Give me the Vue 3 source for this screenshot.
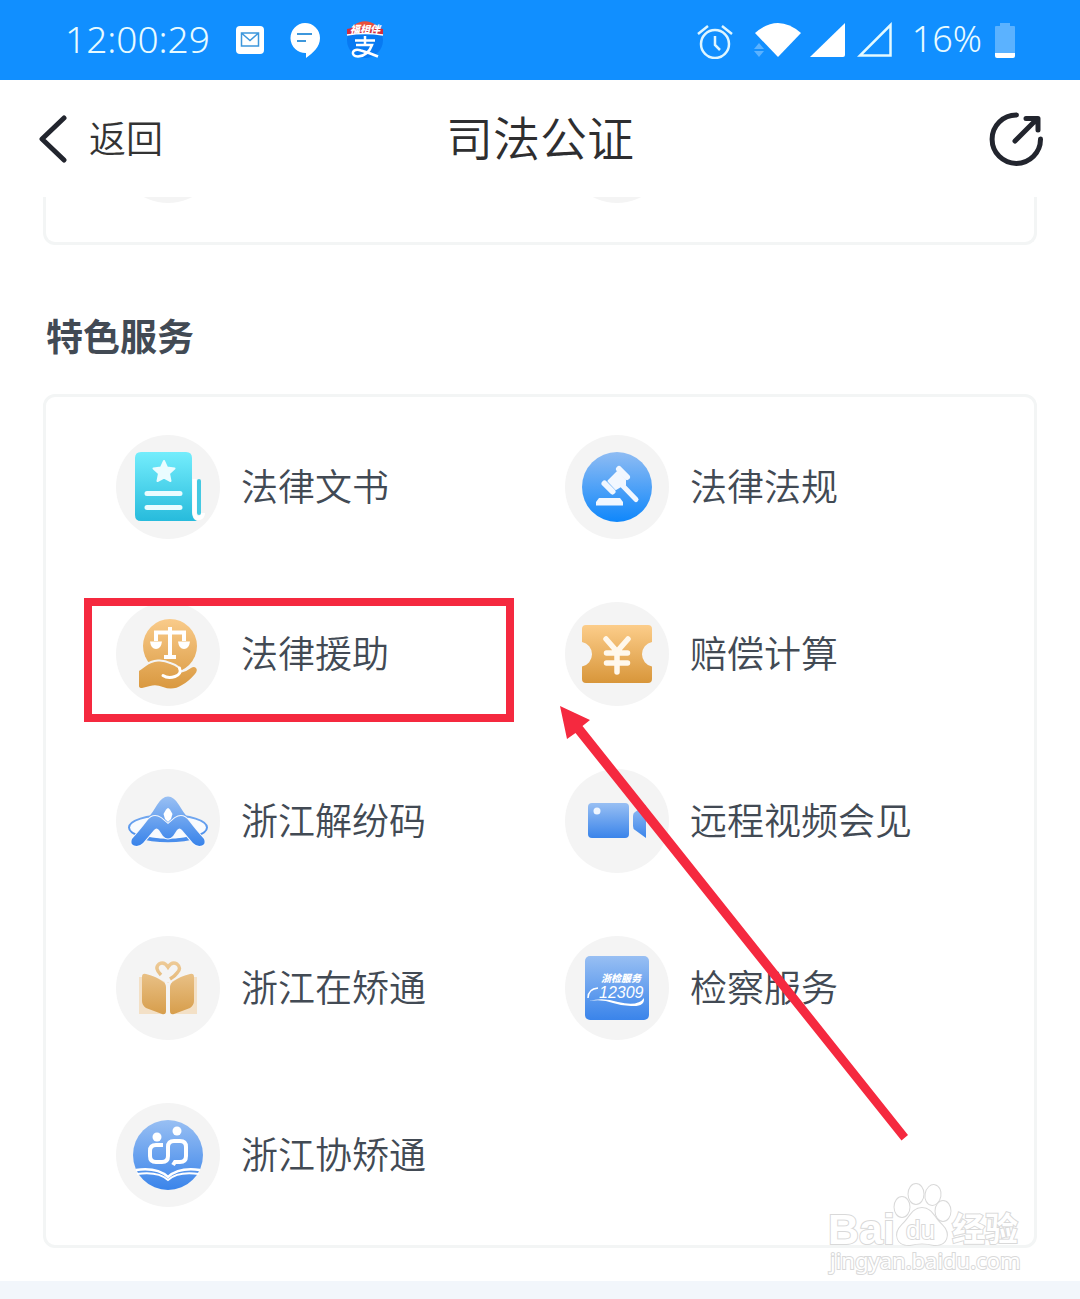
<script setup>
const services = [
  { id: 'doc', label: '法律文书' },
  { id: 'law', label: '法律法规' },
  { id: 'aid', label: '法律援助', marked: true },
  { id: 'pay', label: '赔偿计算' },
  { id: 'dispute', label: '浙江解纷码' },
  { id: 'video', label: '远程视频会见' },
  { id: 'book', label: '浙江在矫通' },
  { id: 'procure', label: '检察服务' },
  { id: 'assist', label: '浙江协矫通' },
]
</script>

<template>
  <div class="page">
    <svg class="defs" width="0" height="0" aria-hidden="true">
      <defs>
        <linearGradient id="gCyan" x1="0" y1="0" x2="0" y2="1"><stop offset="0" stop-color="#74edfc" /><stop offset="1" stop-color="#27bbdc" /></linearGradient>
        <linearGradient id="gBlue" x1="0" y1="0" x2="0" y2="1"><stop offset="0" stop-color="#8fbcf3" /><stop offset="1" stop-color="#0f87fb" /></linearGradient>
        <linearGradient id="gSoft" x1="0" y1="0" x2="0" y2="1"><stop offset="0" stop-color="#98bff3" /><stop offset="1" stop-color="#3a84ea" /></linearGradient>
        <linearGradient id="gGold" x1="0" y1="0" x2="0" y2="1"><stop offset="0" stop-color="#fccd8a" /><stop offset="1" stop-color="#d8963a" /></linearGradient>
        <linearGradient id="gGoldAll" gradientUnits="userSpaceOnUse" x1="0" y1="17" x2="0" y2="87"><stop offset="0" stop-color="#f9cb8a" /><stop offset="1" stop-color="#d9983f" /></linearGradient>
        <linearGradient id="gPeak" gradientUnits="userSpaceOnUse" x1="0" y1="28" x2="0" y2="76"><stop offset="0" stop-color="#98bff3" /><stop offset="1" stop-color="#3a84ea" /></linearGradient>
        <linearGradient id="gBook" gradientUnits="userSpaceOnUse" x1="0" y1="25" x2="0" y2="78"><stop offset="0" stop-color="#eecb98" /><stop offset="1" stop-color="#d79e4c" /></linearGradient>
      </defs>
    </svg>

    <div class="status">
      <div class="status-group left">
        <span class="clock">12:00:29</span>
        <svg width="28" height="28" viewBox="0 0 28 28"><rect width="28" height="28" rx="4" fill="#fff" /><path d="M5.500 7h17v13h-17zM6 7.500l8 7 8-7" fill="none" stroke="#3d97dc" stroke-width="1.500" /></svg>
        <svg width="30" height="38" viewBox="0 0 30 38"><path d="M15 2a15 15 0 0 1 15 15c0 9-7 15-14 20v-5A15 15 0 1 1 15 2z" fill="#fff" /><path d="M7 13h15M7 20h9" stroke="#3d97dc" stroke-width="2" /></svg>
        <svg width="38" height="40" viewBox="0 0 38 40">
          <circle cx="19" cy="20" r="18" fill="#087af2" />
          <path d="M2 14A18 19 0 0 1 36 14Q19 11 2 14z" fill="#e9503b" />
          <path d="M1 9Q19 4 37 9L37 15Q19 11 1 15z" fill="#d42e3d" />
          <path d="M1 15Q19 12 37 15" stroke="#fff" stroke-width="1.500" fill="none" />
          <text x="19" y="13" text-anchor="middle" class="ali-top">福相伴</text>
          <path d="M9 20.500H29M19 16V25M10 25H26Q22 36 12 36.500Q6 36 7 32Q9 28.500 15 30.500Q24 33 32 36.500" fill="none" stroke="#fff" stroke-width="2.500" />
        </svg>
      </div>
      <div class="status-group right">
        <svg width="38" height="38" viewBox="0 0 38 38" fill="none" stroke="#dff6ff" stroke-width="2.500"><circle cx="19" cy="23" r="14" /><path d="M19 15v9l5 5M2 13L12 5M26 5l10 8" /></svg>
        <svg class="wifi" width="48" height="36" viewBox="0 0 48 36"><path d="M1 11Q24-9 47 11L24 35z" fill="#fff" /><path d="M0 27l5-6 5 6zM0 29h10l-5 6z" fill="#5bb2ff" /></svg>
        <div class="signals">
          <svg width="35" height="36" viewBox="0 0 35 36"><path d="M35 1v32q0 2-2 2H0z" fill="#fff" /></svg>
          <svg width="35" height="36" viewBox="0 0 35 36"><path d="M33.500 3v30.500H3z" fill="none" stroke="#e4faff" stroke-width="2.500" /></svg>
        </div>
        <div class="power">
          <span class="percent">16%</span>
          <svg width="20" height="36" viewBox="0 0 20 36"><path d="M0 5q0-1 1-1h4V1h10v3h4q1 0 1 1v26H0z" fill="#5bb2ff" /><path d="M0 31h20v3q0 2-2 2H2q-2 0-2-2z" fill="#fff" /></svg>
        </div>
      </div>
    </div>

    <header class="nav">
      <button class="back" type="button">
        <svg width="30" height="48" viewBox="0 0 30 48"><path d="M26 3L4 24L26 45" fill="none" stroke="#22252e" stroke-width="5" stroke-linecap="round" stroke-linejoin="round" /></svg>
        <span>返回</span>
      </button>
      <h1>司法公证</h1>
      <button class="share" type="button" aria-label="分享">
        <svg width="56" height="56" viewBox="0 0 56 56" fill="none" stroke="#22252e" stroke-width="5" stroke-linecap="round" stroke-linejoin="round"><path d="M28.500 4A24.200 24.200 0 1 0 52.500 28M27 30L49 8M38 7.500H50V19" /></svg>
      </button>
    </header>

    <main class="main">
      <div class="card previous">
        <div class="sliver"><i></i><i></i></div>
      </div>

      <h2>特色服务</h2>

      <section class="card">
        <ul class="grid">
          <li v-for="s in services" :key="s.id" :class="{ marked: s.marked }">
            <a href="#">
              <svg class="icon" viewBox="0 0 104 104" aria-hidden="true">
                <circle cx="52" cy="52" r="52" fill="#f4f4f4" />
                <g v-if="s.id === 'doc'">
                  <path d="M25 17H70Q76 17 76 23V77Q76 84 81 86H25Q19 86 19 80V23Q19 17 25 17Z" fill="url(#gCyan)" />
                  <path d="M78.500 44V78Q79 84 83.500 83Q87 82 87 78" fill="none" stroke="#fff" stroke-width="4" />
                  <rect x="81" y="44" width="4" height="36" rx="2" fill="#45c9e2" />
                  <path d="M48 26L51 32.500L58.500 33.500L53 38.500L54.500 46L48 42.500L41.500 46L43 38.500L37.500 33.500L45 32.500Z" fill="#eafcff" stroke="#eafcff" stroke-width="2" stroke-linejoin="round" />
                  <path d="M31 58.500H64M31 72.500H64" stroke="#eafcff" stroke-width="5" stroke-linecap="round" />
                </g>
                <g v-else-if="s.id === 'law'">
                  <circle cx="52" cy="52" r="35" fill="url(#gBlue)" />
                  <path d="M54 34L62 42M39.500 48.500L47.500 56.500" stroke="#f1f7ff" stroke-width="6" stroke-linecap="round" />
                  <path d="M43.500 46L52.500 37L60 45L60 50L56 51L51 54Z" fill="#f1f7ff" stroke="#f1f7ff" stroke-width="2" stroke-linejoin="round" />
                  <path d="M57 50L71 64.500" stroke="#f1f7ff" stroke-width="5" stroke-linecap="round" />
                  <path d="M34 63H55L58 67V70.500H31V67Z" fill="#f1f7ff" />
                </g>
                <g v-else-if="s.id === 'aid'">
                  <circle cx="54" cy="44" r="27" fill="url(#gGoldAll)" />
                  <path d="M54 25V53M40 39V30.500H68V39" fill="none" stroke="#fff" stroke-width="4" />
                  <path d="M48 55H60" stroke="#fff" stroke-width="4" />
                  <path d="M34 39.500H46Q45 47 40 47Q35 47 34 39.500ZM62 39.500H74Q73 47 68 47Q63 47 62 39.500Z" fill="#fff" />
                  <path d="M23 69Q26 67 30 64Q35 60 42 59.500Q48 59 54 62Q64 65 64 71Q70 70 75 66Q78 64 80 66Q82 68 79 72Q72 80 66 83Q57 89 47 85Q40 82 34 84L26 86Q23 86 23 84Z" fill="url(#gGoldAll)" stroke="#f4f4f4" stroke-width="4" paint-order="stroke" />
                  <path d="M47 73.500Q52 77 59 74.500Q66 72 63.500 66" fill="none" stroke="#fff" stroke-width="3" stroke-linecap="round" />
                </g>
                <g v-else-if="s.id === 'pay'">
                  <path d="M21 23H83Q87 23 87 27V40A12.500 12.500 0 0 0 87 64.500V77Q87 81 83 81H21Q17 81 17 77V64.500A12.500 12.500 0 0 0 17 40V27Q17 23 21 23Z" fill="url(#gGold)" />
                  <path d="M41 37L52 49.500L63 37M52 50V70M41.500 51H62.500M41.500 61H62.500" fill="none" stroke="#fff8ec" stroke-width="5.500" stroke-linecap="round" />
                </g>
                <g v-else-if="s.id === 'dispute'">
                  <ellipse cx="52" cy="58.500" rx="39" ry="12.500" fill="#f9fbfe" stroke="url(#gPeak)" stroke-width="2" />
                  <path d="M20 67Q52 76 84 67" fill="none" stroke="#4a8eec" stroke-width="3.500" />
                  <path d="M32 49Q37 43 41 36Q46 27.500 52 27.500Q58 27.500 63 36Q67 43 72 49L64 50L52 54L40 50Z" fill="url(#gPeak)" />
                  <path d="M52 39Q50.500 39 47.500 45L49 50L52 53L55 50L56.500 45Q53.500 39 52 39Z" fill="#fff" />
                  <path d="M16 70Q25 60 31 52Q37 44 45 49L52 55L59 49Q67 44 73 52Q79 60 88 70Q90 75 86 76.500Q81 78 77 74L66 61Q63.500 58 61 61L57 67Q52 72 47 67L43 61Q40.500 58 38 61L27 74Q23 78 18 76.500Q14 75 16 70Z" fill="url(#gPeak)" stroke="#f6f8fc" stroke-width="2" paint-order="stroke" />
                </g>
                <g v-else-if="s.id === 'video'" fill="url(#gSoft)">
                  <rect x="23" y="34" width="41" height="35" rx="4" />
                  <path d="M68 47Q68 44 70 43L81 36V69L70 61Q68 60 68 57Z" />
                  <circle cx="32" cy="42" r="3.500" fill="#eff6ff" />
                </g>
                <g v-else-if="s.id === 'book'">
                  <path d="M23 41H81V78H23Z" fill="#f3e0c6" />
                  <path d="M30 36H74L55 46H49Z" fill="#f4f4f4" />
                  <path d="M49 44L52 47L56 44L55 78H49Z" fill="#f4f4f4" />
                  <path d="M26 41Q26 37 30 38Q39 40 46 45Q50 47 50 51V75Q50 79 46 78Q38 75 30 72Q26 69 26 65ZM78 41Q78 37 74 38Q65 40 58 45Q54 47 54 51V75Q54 79 58 78Q66 75 74 72Q78 69 78 65Z" fill="url(#gBook)" />
                  <path d="M45 39Q38 32 43 28Q48 25 52 31Q56 25 61 28Q66 32 61 37Q59 40 54 43" fill="none" stroke="url(#gBook)" stroke-width="3.500" />
                </g>
                <g v-else-if="s.id === 'procure'">
                  <rect x="20" y="20" width="64" height="64" rx="5" fill="url(#gSoft)" />
                  <text x="36" y="46" class="tiny-cn">浙检服务</text>
                  <text x="34" y="62" class="tiny-num">12309</text>
                  <path d="M23 62Q23 53 33 52" fill="none" stroke="#fff" stroke-width="1.500" />
                  <path d="M24 65Q38 61 53 66Q73 71 79 62Q80 71 66 70Q57 70 48 67Q38 63 24 65Z" fill="#fff" />
                </g>
                <g v-else>
                  <circle cx="52" cy="52" r="35" fill="url(#gSoft)" />
                  <circle cx="41" cy="34" r="4.500" fill="#fff" /><circle cx="61" cy="28" r="4.500" fill="#fff" />
                  <path d="M47 42H40Q34 42 34 48V53Q34 59 40 59H46Q52 59 52 53V44Q52 38 58 38H64Q70 38 70 44V53Q70 59 64 59H59L57 62" fill="none" stroke="#fff" stroke-width="4" />
                  <path d="M20 67Q41 64 52 74Q63 64 84 67" fill="none" stroke="#fff" stroke-width="2.500" />
                  <path d="M21 71Q42 68 52 77Q62 68 83 71" fill="none" stroke="#fff" stroke-width="2" />
                </g>
              </svg>
              <span>{{ s.label }}</span>
            </a>
          </li>
        </ul>
        <svg class="arrow" width="348" height="435" viewBox="0 0 348 435" aria-hidden="true"><path d="M0 0L30 14L22.500 20L348 429L341.500 434.500L15.500 27L7 33Z" fill="#f5293f" /></svg>
      </section>

      <svg class="watermark" width="200" height="100" viewBox="0 0 200 100">
        <g class="wm">
          <text x="2" y="63" class="wm-bai">Bai</text>
          <ellipse cx="76" cy="26" rx="7.500" ry="10" /><ellipse cx="90" cy="13" rx="7.500" ry="10" /><ellipse cx="107" cy="14" rx="7.500" ry="10" transform="rotate(10 107 14)" /><ellipse cx="117" cy="30" rx="7.500" ry="10" />
          <path d="M96 27C106 27 108 37 116 44C125 53 121 65 108 64Q96 61 84 64C71 65 67 53 76 44C84 37 86 27 96 27Z" />
          <text x="80" y="58" class="wm-du">du</text>
          <text x="126" y="60" class="wm-cn">经验</text>
          <text x="4" y="88" class="wm-url">jingyan.baidu.com</text>
        </g>
      </svg>
    </main>
  </div>
</template>

<style>
body {
  margin: 0;
  background: #f2f6fb;
}
</style>

<style scoped>
.page {
  min-height: 100vh;
  background: #f2f6fb;
  color: #424a54;
  font-family: "Noto Sans CJK SC", "Noto Sans", sans-serif;
  font-weight: 350;
}
.page svg {
  display: block;
  flex: none;
}
.page .defs {
  position: absolute;
}
.status {
  display: flex;
  justify-content: space-between;
  align-items: center;
  height: 80px;
  padding: 0 65px;
  background: #118fff;
  color: #e8fbff;
  font-family: "Noto Sans", sans-serif;
  font-weight: 300;
}
.status-group,
.signals,
.power {
  display: flex;
  align-items: center;
}
.left {
  gap: 26px;
}
.right {
  gap: 20px;
}
.wifi {
  margin-right: -12px;
}
.signals {
  gap: 12px;
}
.power {
  gap: 13px;
}
.clock,
.percent {
  line-height: 40px;
  padding-bottom: 2px;
  font-size: 37px;
}
.percent {
  font-size: 36px;
}
.ali-top {
  fill: #fff;
  font-family: "Noto Sans CJK SC", sans-serif;
  font-size: 10px;
  font-weight: 900;
  font-style: italic;
}
.nav {
  display: grid;
  grid-template-columns: 1fr auto 1fr;
  align-items: center;
  height: 117px;
  padding: 0 36px;
  background: #fff;
}
.nav h1 {
  margin: 0;
  padding-bottom: 6px;
  color: #2e2e30;
  font-size: 47px;
  font-weight: 350;
  line-height: 60px;
}
button {
  padding: 0;
  border: 0;
  background: none;
  font: inherit;
  color: #333;
}
.back {
  display: flex;
  align-items: center;
  gap: 21px;
  padding-left: 2px;
  font-size: 37px;
  line-height: 54px;
}
.back span,
li span {
  padding-bottom: 4px;
}
.share {
  justify-self: end;
}
.main {
  position: relative;
  padding: 0 43px 33px;
  background: #fff;
}
.card {
  position: relative;
  padding: 38px 45px;
  border: 3px solid #f3f5f5;
  border-radius: 12px;
}
.previous {
  padding: 0 45px 39px;
  border-top: 0;
  border-radius: 0 0 12px 12px;
}
.sliver {
  display: grid;
  grid-template-columns: 1fr 1fr;
  grid-template-rows: 6px;
  align-items: end;
  height: 6px;
  overflow: hidden;
}
.sliver i {
  width: 104px;
  height: 104px;
  margin-left: 25px;
  border-radius: 50%;
  background: #f4f4f4;
}
h2 {
  margin: 63px 3px 32px;
  font-size: 37px;
  font-weight: 700;
  line-height: 54px;
}
.grid {
  display: grid;
  grid-template-columns: 1fr 1fr;
  row-gap: 63px;
  margin: 0;
  padding: 0;
  list-style: none;
}
li {
  position: relative;
}
li a {
  display: flex;
  align-items: center;
  gap: 21px;
  padding-left: 25px;
  color: inherit;
  font-size: 37px;
  line-height: 54px;
  text-decoration: none;
  white-space: nowrap;
}
.icon {
  width: 104px;
  height: 104px;
}
.marked::after {
  content: "";
  position: absolute;
  inset: -4px 26px -16px -7px;
  border: 8px solid #f5293f;
}
.arrow {
  position: absolute;
  left: 514px;
  top: 309px;
}
.tiny-cn {
  fill: #fff;
  font-size: 10px;
  font-weight: 900;
  font-style: italic;
}
.tiny-num {
  fill: #fff;
  font-family: "Liberation Sans", sans-serif;
  font-size: 16px;
  font-style: italic;
}
.watermark {
  position: absolute;
  right: 54px;
  bottom: 0;
}
.wm {
  fill: #fff;
  stroke: #d9d9d9;
  stroke-width: 2px;
  paint-order: stroke;
}
.wm-bai {
  font-family: "Liberation Sans", sans-serif;
  font-size: 43px;
  font-weight: 700;
}
.wm-du {
  font-family: "Liberation Sans", sans-serif;
  font-size: 26px;
  font-weight: 400;
}
.wm-cn {
  font-size: 33px;
  font-weight: 700;
}
.wm-url {
  font-family: "Noto Sans", sans-serif;
  font-size: 22px;
  font-weight: 400;
}
</style>
